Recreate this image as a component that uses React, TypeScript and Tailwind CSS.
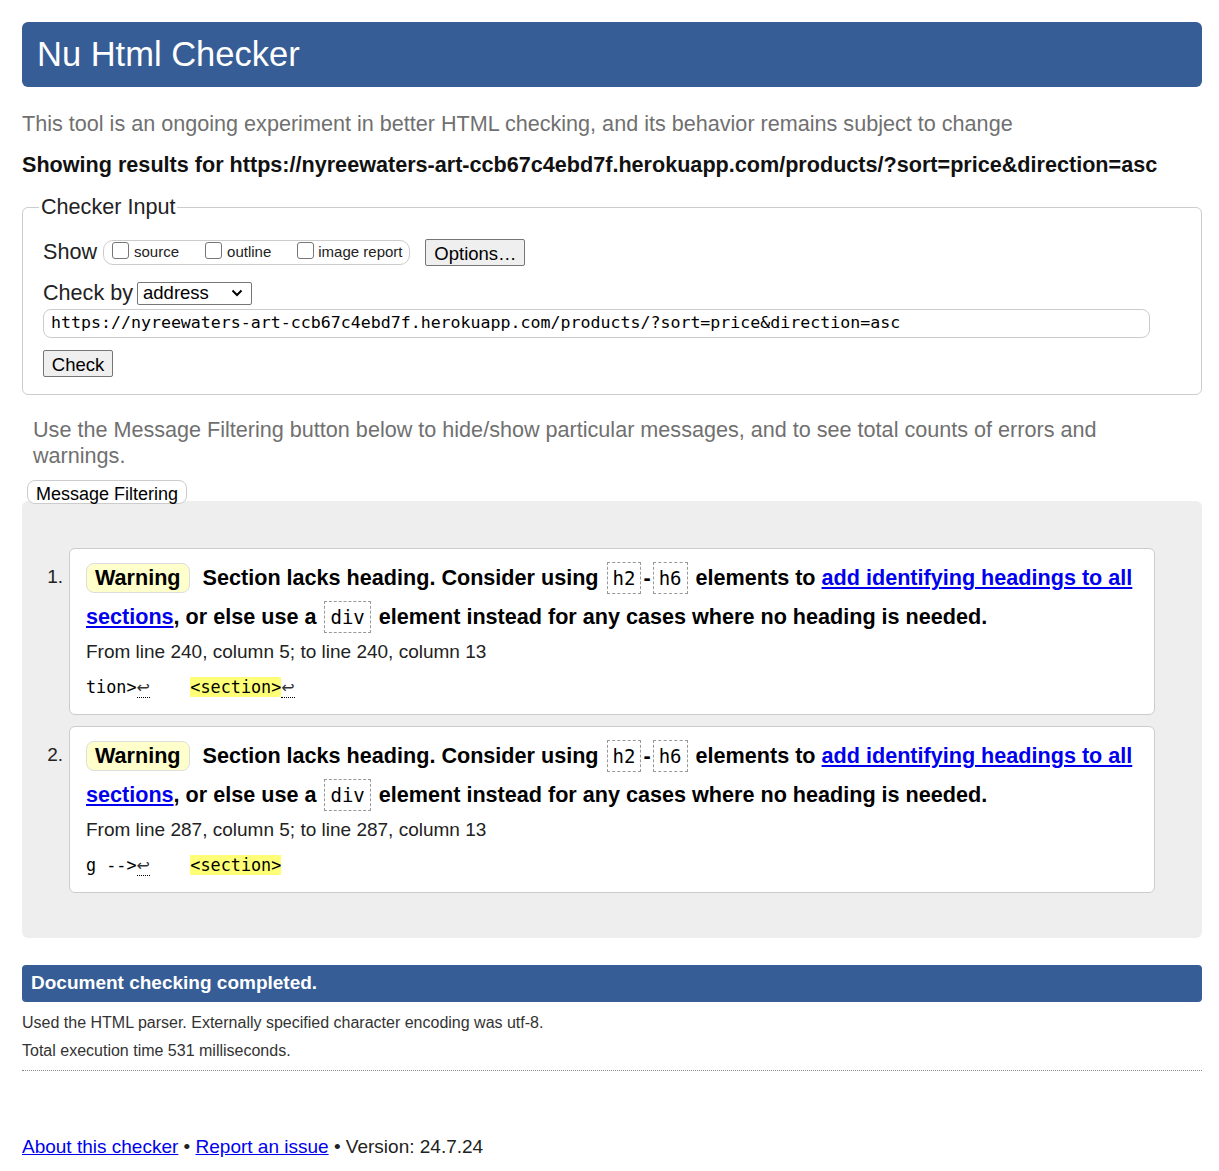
import React from "react";

const sans = { fontFamily: '"Liberation Sans", Arial, sans-serif' };
const mono = '[font-family:"DejaVu_Sans_Mono",monospace]';

function Code({ children }: { children: React.ReactNode }) {
  return (
    <code
      className={`${mono} mx-[2px] inline-block border border-dashed border-[#999] px-[5px] text-[19px] font-normal leading-[30px]`}
    >
      {children}
    </code>
  );
}

function Box() {
  return (
    <span className="inline-block h-[17px] w-[17px] self-start mt-[1px] rounded-[3px] border border-[#767676] bg-white" />
  );
}

function Arrow() {
  return (
    <span className="border-b border-dotted border-black font-['DejaVu_Sans',sans-serif] text-[16px] text-[#333]">
      ↩
    </span>
  );
}

function Message({ n, from, to, before, arrowAfter }: { n: number; from: string; to: string; before: string; arrowAfter: boolean }) {
  return (
    <li className="flex">
      <span className="w-[41px] shrink-0 pt-[18px] pr-[6px] text-right text-[19px] leading-[22px] text-[#222]">
        {n}.
      </span>
      <div className="flex-1 rounded-[6px] border border-[#ccc] bg-white pt-[9px] pb-[12px] pl-[16px] pr-[8px]">
        <p className="text-[21.6px] font-bold leading-[39px] text-black">
          <span className="mr-[13px] inline-block rounded-[8px] border border-[#ddd] bg-[#ffffcc] px-[8px] leading-[28px]">
            Warning
          </span>
          Section lacks heading. Consider using <Code>h2</Code>-<Code>h6</Code> elements to{" "}
          <a href="#" className="text-[#0000ee] underline">
            add identifying headings to all sections
          </a>
          , or else use a <Code>div</Code> element instead for any cases where no heading is needed.
        </p>
        <p className="mt-[2px] text-[19px] leading-[28px] text-[#222]">
          From line {from}, column 5; to line {to}, column 13
        </p>
        <p className={`${mono} mt-[7px] whitespace-pre text-[16.8px] leading-[28px] text-black`}>
          {before}
          <Arrow />
          {"    "}
          <span className="bg-[#ffff77]">{"<section>"}</span>
          {arrowAfter && <Arrow />}
        </p>
      </div>
    </li>
  );
}

export default function App() {
  return (
    <div className="min-h-[1171px] bg-white pl-[22px] pr-[17px] pt-[22px] pb-[12px] text-black" style={sans}>
      {/* Header */}
      <header className="flex h-[65px] items-center rounded-[6px] bg-[#365d95] px-[15px]">
        <h1 className="text-[34.5px] leading-none font-normal text-white">Nu Html Checker</h1>
      </header>

      <p className="mt-[24px] text-[21.6px] leading-[26px] text-[#707070]">
        This tool is an ongoing experiment in better HTML checking, and its behavior remains subject to change
      </p>
      <p className="mt-[15px] text-[21.6px] font-bold leading-[26px] text-[#111]">
        Showing results for https://nyreewaters-art-ccb67c4ebd7f.herokuapp.com/products/?sort=price&amp;direction=asc
      </p>

      {/* Checker input */}
      <fieldset className="mt-[16px] rounded-[6px] border border-[#ccc] px-[20px] pb-[17px]">
        <legend className="-ml-[4px] px-[2px] text-[21.6px] leading-[26px] text-[#222]">Checker Input</legend>
        <div className="mt-[18px] flex h-[28px] items-center">
          <span className="text-[21.6px] text-[#222]">Show</span>
          <div className="ml-[6px] flex h-[25px] items-center rounded-[10px] border border-[#ccc] pl-[8px] pr-[7px] text-[15px] text-[#222]">
            <Box />
            <span className="ml-[5px]">source</span>
            <span className="ml-[26px]" />
            <Box />
            <span className="ml-[5px]">outline</span>
            <span className="ml-[26px]" />
            <Box />
            <span className="ml-[4px]">image report</span>
          </div>
          <button className="ml-[15px] h-[27px] w-[100px] rounded-[2px] border border-[#767676] bg-[#efefef] text-[18.5px] text-black">
            Options…
          </button>
        </div>
        <div className="mt-[14px] flex h-[26px] items-center">
          <span className="text-[21.6px] text-[#222]">Check by</span>
          <div className="ml-[4px] flex h-[23px] w-[115px] items-center justify-between rounded-[2px] border border-[#767676] bg-white pl-[5px] pr-[8px] text-[18.5px]">
            <span>address</span>
            <svg width="12" height="8" viewBox="0 0 12 8" fill="none" stroke="black" strokeWidth="2">
              <path d="M1.5 1.5 L6 6 L10.5 1.5" />
            </svg>
          </div>
        </div>
        <div className={`${mono} mt-[3px] flex h-[29px] w-[1107px] items-center rounded-[8px] border border-[#ccc] pl-[7px] text-[16.6px] text-black`}>
          https://nyreewaters-art-ccb67c4ebd7f.herokuapp.com/products/?sort=price&amp;direction=asc
        </div>
        <button className="mt-[12px] block h-[27px] w-[70px] rounded-[2px] border border-[#767676] bg-[#efefef] text-[18.5px]">
          Check
        </button>
      </fieldset>

      <p className="mt-[22px] ml-[11px] w-[1100px] text-[21.6px] leading-[26px] text-[#707070]">
        Use the Message Filtering button below to hide/show particular messages, and to see total counts of errors and warnings.
      </p>
      <button className="relative z-10 mt-[11px] ml-[5px] block h-[24px] w-[160px] rounded-[8px] border border-[#ccc] bg-white text-[18px] text-black">
        Message Filtering
      </button>

      {/* Results */}
      <section className="-mt-[3px] rounded-[6px] bg-[#eeeeee] pt-[47px] pr-[47px] pb-[45px] pl-[6px]">
        <ol className="flex flex-col gap-[11px]">
          <Message n={1} from="240" to="240" before="tion>" arrowAfter />
          <Message n={2} from="287" to="287" before="g -->" arrowAfter={false} />
        </ol>
      </section>

      <div className="mt-[27px] flex h-[37px] items-center rounded-[4px] bg-[#365d95] px-[9px]">
        <span className="text-[19px] font-bold text-white">Document checking completed.</span>
      </div>
      <p className="mt-[7px] text-[16px] leading-[28px] text-[#333]">
        Used the HTML parser. Externally specified character encoding was utf-8.
      </p>
      <p className="text-[16px] leading-[28px] text-[#333]">Total execution time 531 milliseconds.</p>
      <div className="mt-[5px] border-b border-dotted border-[#888]" />

      <p className="mt-[62px] text-[19px] leading-[28px] text-[#222]">
        <a href="#" className="text-[#0000ee] underline">About this checker</a> •{" "}
        <a href="#" className="text-[#0000ee] underline">Report an issue</a> • Version: 24.7.24
      </p>
    </div>
  );
}
